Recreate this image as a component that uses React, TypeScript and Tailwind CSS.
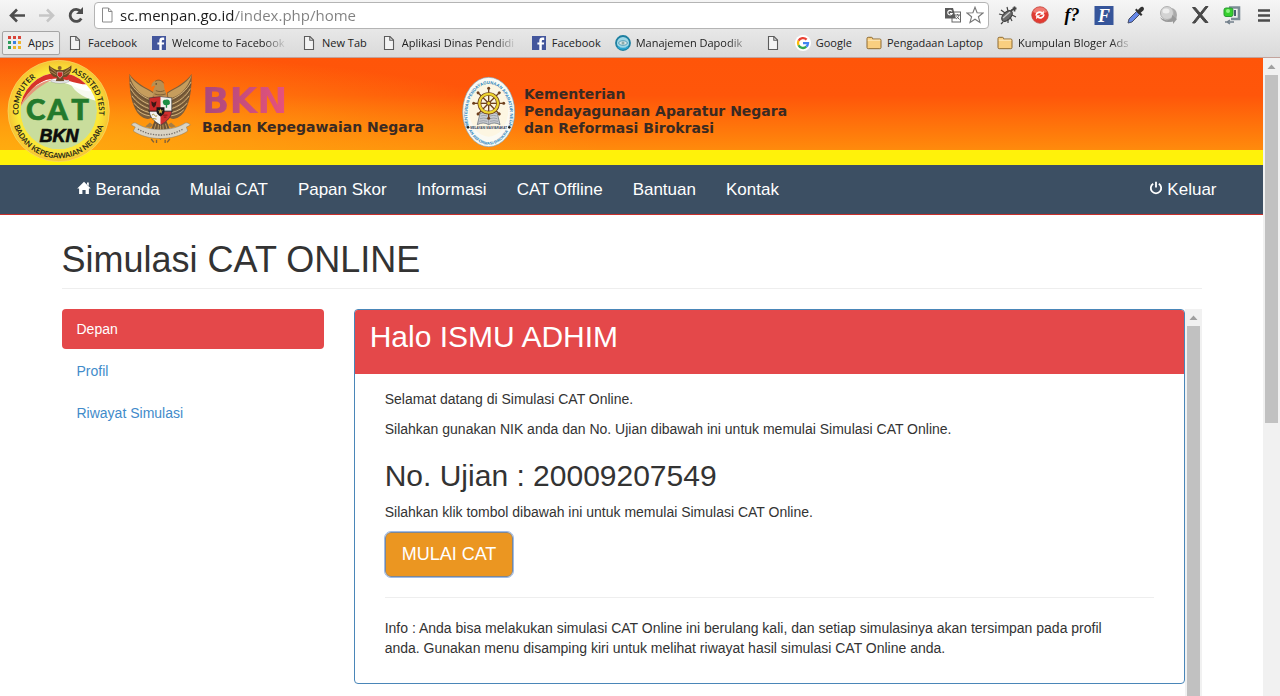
import React from "react";

const DocIcon = () => (
  <svg viewBox="0 0 16 16" className="size-4 shrink-0" aria-hidden="true">
    <path d="M3.5 1.5h5.5l3.5 3.5v9.5h-9z" fill="#f4f4f4" stroke="#5c5c5c" strokeWidth="1.1" />
    <path d="M8.8 1.7v3.6h3.6" fill="none" stroke="#5c5c5c" strokeWidth="1.1" />
  </svg>
);

const FacebookIcon = () => (
  <svg viewBox="0 0 16 16" className="size-4 shrink-0" aria-hidden="true">
    <rect x="1" y="1" width="14" height="14" fill="#43569c" />
    <path d="M8.3 15V9.6H6.4V7.4h1.9V5.8c0-2 1.1-3.2 3-3.2h1.9v2.3h-1.3c-.8 0-1.1.4-1.1 1.1v1.4h2.4l-.3 2.2h-2.1V15z" fill="#fff" />
  </svg>
);

const FolderIcon = () => (
  <svg viewBox="0 0 16 16" className="size-4 shrink-0" aria-hidden="true">
    <path d="M1 3.5c0-.8.4-1.2 1.2-1.2h3.2c.7 0 1 .3 1.1 1l.1.7h7.2c.8 0 1.2.4 1.2 1.2v7.3c0 .8-.4 1.2-1.2 1.2H2.2c-.8 0-1.2-.4-1.2-1.2z" fill="#f9cf80" stroke="#8d6a33" />
    <path d="M1.8 5.2h12.4" stroke="#fdebc2" />
  </svg>
);

const GoogleIcon = () => (
  <svg viewBox="0 0 16 16" className="size-4 shrink-0" aria-hidden="true">
    <circle cx="8" cy="8" r="8" fill="#fff" />
    <g fill="none" strokeWidth="2.3">
      <path d="M11.6 4.6A5 5 0 0 0 3.5 5.8" stroke="#ea4335" />
      <path d="M3.5 5.8a5 5 0 0 0 0 4.4" stroke="#fbbc05" />
      <path d="M3.5 10.2a5 5 0 0 0 7.8 1.5" stroke="#34a853" />
      <path d="M11.3 11.7A4.8 4.8 0 0 0 13 8.2H8" stroke="#4285f4" />
    </g>
  </svg>
);

const DapodikIcon = () => (
  <svg viewBox="0 0 16 16" className="size-4 shrink-0" aria-hidden="true">
    <circle cx="8" cy="8" r="7" fill="#9fd7e6" stroke="#1d7fa0" strokeWidth="1.8" />
    <path d="M3.5 8c1-3 8-3 9 0-1 3-8 3-9 0z" fill="#d8e6e6" stroke="#3d8da8" strokeWidth=".8" />
    <circle cx="8" cy="8" r="1.5" fill="#8aa" />
    <path d="M3 11.5c2 3 8 3 10 0" fill="none" stroke="#2aa4cf" strokeWidth="1.8" />
  </svg>
);

const AppsIcon = () => {
  const colors = ["#d8453a", "#d8453a", "#d8453a", "#2c9c5b", "#3a7fe0", "#efb52c", "#2c9c5b", "#efb52c", "#efb52c"];
  return (
    <svg viewBox="0 0 13 13" className="size-[13px] shrink-0" aria-hidden="true">
      {colors.map((c, i) => (
        <rect key={i} x={(i % 3) * 5} y={Math.floor(i / 3) * 5} width="3" height="3" fill={c} />
      ))}
    </svg>
  );
};

const bookmarks: { icon: () => React.ReactElement; label: string; fade?: boolean }[] = [
  { icon: DocIcon, label: "Facebook" },
  { icon: FacebookIcon, label: "Welcome to Facebook", fade: true },
  { icon: DocIcon, label: "New Tab" },
  { icon: DocIcon, label: "Aplikasi Dinas Pendidi", fade: true },
  { icon: FacebookIcon, label: "Facebook" },
  { icon: DapodikIcon, label: "Manajemen Dapodik", fade: true },
  { icon: DocIcon, label: "" },
  { icon: GoogleIcon, label: "Google" },
  { icon: FolderIcon, label: "Pengadaan Laptop" },
  { icon: FolderIcon, label: "Kumpulan Bloger Ads", fade: true },
];

const extensions: { name: string; art: React.ReactElement }[] = [
  {
    name: "Bug",
    art: (
      <g stroke="#444" fill="none" strokeWidth="1.2">
        <ellipse cx="9" cy="11" rx="6.5" ry="3.8" transform="rotate(-45 9 11)" fill="#6d6d6d" />
        <path d="M5 13l7-6" stroke="#ccc" />
        <path d="M1 9l4 1M3 5l4 3M9 2l1 4M10 18v-4M14 16l-2-4M18 12l-4-2M5 17l-2 2" />
        <path d="M13 6l4-4M14.5 3.5h4M16.5 1.5v5" strokeWidth="1.8" />
      </g>
    ),
  },
  {
    name: "Refresh",
    art: (
      <g>
        <circle cx="10" cy="10" r="8.3" fill="#e23b32" stroke="#b9483f" strokeWidth=".7" />
        <path d="M3 7a7.5 7.5 0 0 1 14 0c-5 2-9 2-14 0z" fill="#f58c82" opacity=".8" />
        <path d="M6 10.5c.5-3.5 4-4 6-2.5M14 9.5c-.5 3.5-4 4-6 2.5" stroke="#fff" strokeWidth="1.7" fill="none" />
        <path d="M13.8 5.8v4h-4zM6.2 14.2v-4h4z" fill="#fff" />
      </g>
    ),
  },
  {
    name: "Font finder",
    art: (
      <text x="10" y="16" textAnchor="middle" fontFamily="Liberation Serif, serif" fontWeight="700" fontStyle="italic" fontSize="18" fill="#000">
        f?
      </text>
    ),
  },
  {
    name: "Flash",
    art: (
      <g>
        <rect x="0.5" y="1" width="19" height="19" fill="#36559a" />
        <text x="10" y="17" textAnchor="middle" fontFamily="Liberation Serif, serif" fontWeight="700" fontStyle="italic" fontSize="18" fill="#fff">
          F
        </text>
      </g>
    ),
  },
  {
    name: "Colour picker",
    art: (
      <g>
        <path d="M2 18l1-4 7.5-7.5 3 3L6 17z" fill="#6688e8" stroke="#444c66" />
        <path d="M9 5l6 6 1.5-1.5-1.8-1.8 2.6-2.2c2-2.2-.8-5-3-3l-2.4 2.6L10.5 3.5z" fill="#333" />
      </g>
    ),
  },
  {
    name: "Globe",
    art: (
      <g>
        <ellipse cx="13" cy="10" rx="6" ry="7" fill="#aaa" />
        <circle cx="9" cy="8" r="6.5" fill="#d3d3d3" stroke="#b2b2b2" />
        <path d="M2 12c5 4 9 4 12 1v-3l5 4-4 5v-3c-5 2-11 1-13-4z" fill="#999" />
        <ellipse cx="8" cy="6" rx="3.5" ry="2.5" fill="#eee" />
      </g>
    ),
  },
  {
    name: "X",
    art: <path d="M2.5 2.5h2.8L18 17.5h-3zM15.5 1.5H18L5 18H2.5z" fill="#484848" stroke="#484848" />,
  },
  {
    name: "Downloader",
    art: (
      <g>
        <path d="M7 2.5h10V14H9" fill="none" stroke="#7c8c96" strokeWidth="2.6" />
        <path d="M13 5v6" stroke="#4b5d70" strokeWidth="2" />
        <rect x="2" y="3" width="9" height="8.5" rx="2" fill="#35cf2d" stroke="#2b9a35" />
        <circle cx="6" cy="6" r="2" fill="#8ff284" />
        <path d="M3 17h9M8 19l-3-2 3-2" stroke="#73808c" strokeWidth="1.5" fill="none" />
      </g>
    ),
  },
  {
    name: "Menu",
    art: <path d="M4 5.5h12M4 10.5h12M4 15.5h12" stroke="#4b4b4b" strokeWidth="2.6" />,
  },
];

const BrowserBar = () => (
  <div className="shrink-0 border-b border-[#c3a39c] bg-linear-to-b from-[#f6f6f6] to-[#dadada] font-['Open_Sans','Noto_Sans',sans-serif] text-[#222]">
    <div className="flex h-[30px] items-center pr-[6px] pl-2">
      <button aria-label="Back" className="size-5">
        <svg viewBox="0 0 20 20" fill="none" stroke="#4d4d4d" strokeWidth="2.6">
          <path d="M17 10.5H4M9 4.5l-6 6 6 6" />
        </svg>
      </button>
      <button aria-label="Forward" className="ml-2 size-5">
        <svg viewBox="0 0 20 20" fill="none" stroke="#c6c6c6" strokeWidth="2.6">
          <path d="M3 10.5h13M11 4.5l6 6-6 6" />
        </svg>
      </button>
      <button aria-label="Reload" className="ml-[10px] size-5">
        <svg viewBox="0 0 20 20">
          <path d="M15.3 13.5a6 6 0 1 1-.6-7" fill="none" stroke="#4d4d4d" strokeWidth="2.8" />
          <path d="M17 2v7h-7z" fill="#4d4d4d" />
        </svg>
      </button>
      <div className="ml-2 flex h-[27px] grow items-center rounded-sm border border-[#b4b4b4] bg-white px-1">
        <svg viewBox="0 0 16 16" className="size-4 shrink-0" aria-hidden="true">
          <path d="M3.5 1h6L13 4.5V15H3.5z" fill="#fff" stroke="#8a8a8a" />
          <path d="M9.5 1v3.5H13" fill="none" stroke="#8a8a8a" />
        </svg>
        <input
          aria-label="Address"
          defaultValue="sc.menpan.go.id/index.php/home"
          className="ml-[5px] min-w-0 grow bg-[linear-gradient(90deg,#1c1c1c_115px,#808080_115px)] bg-clip-text text-[15px] leading-5 text-transparent outline-none"
        />
        <button aria-label="Translate" className="size-4">
          <svg viewBox="0 0 16 16">
            <rect x="7" y="5" width="8.5" height="10" fill="#fff" stroke="#666" />
            <path d="M0 1h8l3 10.5H0z" fill="#5b5b5b" />
            <path d="M7 4.4A2.3 2.3 0 1 0 7.2 6.5H5" fill="none" stroke="#fff" strokeWidth="1.1" />
            <path d="M10 8h5M12.5 7v1M14 8c-.5 2-2 3.500-3 4M11.500 9.500l3 3" fill="none" stroke="#666" />
          </svg>
        </button>
        <button aria-label="Bookmark this page" className="ml-[5px] size-[18px]">
          <svg viewBox="0 0 18 18">
            <path d="M9 1.2l2.1 5.5 5.9.3-4.6 3.7 1.6 5.7L9 13.2l-5 3.2 1.6-5.7L1 7l5.9-.3z" fill="#fff" stroke="#777" strokeWidth="1.1" />
          </svg>
        </button>
      </div>
      <div className="ml-[9px] flex gap-3">
        {extensions.map((e) => (
          <button key={e.name} aria-label={e.name} className="size-5">
            <svg viewBox="0 0 20 20">{e.art}</svg>
          </button>
        ))}
      </div>
    </div>
    <div className="flex h-[27px] items-center gap-[14px] pb-0.5 text-[11px] leading-4 whitespace-nowrap">
      <button className="-mr-[7px] ml-0.5 flex h-6 w-[58px] shrink-0 items-center gap-[7px] rounded-xs border border-[#a5a5a5] bg-[#ececec] px-[5px] shadow-xs">
        <AppsIcon />
        Apps
      </button>
      {bookmarks.map(({ icon: Icon, label, fade }, i) => (
        <a key={i} href="#" aria-label={label || "Bookmark"} className="flex shrink-0 items-center gap-[5px]">
          <Icon />
          {label && (
            <span className={fade ? "w-[115px] [mask-image:linear-gradient(90deg,#000_80%,transparent)]" : ""}>
              {label}
            </span>
          )}
        </a>
      ))}
    </div>
  </div>
);

const CatLogo = () => (
  <svg viewBox="20 6 312 318" className="h-[106px] w-[104px] shrink-0" role="img" aria-label="CAT BKN">
    <defs>
      <path id="ringTop" d="M54.7 178A121 121 0 1 1 295.3 178" />
      <path id="ringBottom" d="M41 210A141 141 0 0 0 309 210" />
      <clipPath id="ringInner">
        <circle cx="175" cy="165" r="115" />
      </clipPath>
      <radialGradient id="ringFill">
        <stop offset=".8" stopColor="#fbe738" />
        <stop offset="1" stopColor="#f5c433" />
      </radialGradient>
    </defs>
    <circle cx="175" cy="165" r="152" fill="url(#ringFill)" stroke="#f7dc6a" strokeWidth="2" />
    <g clipPath="url(#ringInner)">
      <circle cx="175" cy="165" r="115" fill="#c9dd9c" />
      <path d="M55 170C70 90 130 70 180 78c45 8 70 40 110 22V20H55z" fill="#fff" />
      <path d="M60 150C90 90 130 65 175 68c40 4 60 24 110 14V20H60z" fill="#d7332a" />
      <path d="M60 150c25-50 60-75 100-80-30 12-70 40-98 80z" fill="#e5977b" />
      <path d="M210 82c25 12 50 18 80 14v40c-20-8-60-14-80-54z" fill="#fff" opacity=".85" />
    </g>
    <g>
      <path d="M146 28c8 8 16 12 24 14h18c8-2 18-6 25-14 2 14-3 26-14 34l-11 2 4 12h-26l4-12-10-2c-11-8-16-20-14-34z" fill="#6c4a26" />
      <path d="M150 36l18 14M150 46l17 10M209 36l-17 14M209 46l-17 10" stroke="#b9935a" strokeWidth="2.5" />
      <circle cx="178" cy="36" r="6" fill="#8b6430" />
      <path d="M171 48h16v10l-8 9-8-9z" fill="#c22" stroke="#eee" strokeWidth="1.5" />
      <path d="M152 71q27 10 54 0v6q-27 10-54 0z" fill="#eee" stroke="#777" />
    </g>
    <g fontFamily="Lato, sans-serif" fontWeight="700" fill="#2c2b16">
      <text fontSize="23">
        <textPath href="#ringTop" startOffset="2">COMPUTER</textPath>
      </text>
      <text fontSize="23">
        <textPath href="#ringTop" startOffset="100%" textAnchor="end">ASSISTED TEST</textPath>
      </text>
      <text fontSize="23">
        <textPath href="#ringBottom" startOffset="50%" textAnchor="middle">BADAN KEPEGAWAIAN NEGARA</textPath>
      </text>
    </g>
    <g fontFamily="Lato, sans-serif" fontWeight="900" fontSize="88" fill="#237a2c" stroke="#237a2c" strokeWidth="2">
      <text x="77" y="191">C</text>
      <text x="141" y="191">A</text>
      <text x="213" y="191">T</text>
    </g>
    <text x="176" y="258" textAnchor="middle" fontFamily="Liberation Sans, sans-serif" fontWeight="700" fontStyle="italic" fontSize="54" fill="#0c0c0c" stroke="#0c0c0c" strokeWidth="2">
      BKN
    </text>
  </svg>
);

const WingFeathers = () => (
  <g>
    <path d="M386 54c0 30 2 66 12 92 6 18 16 32 30 40 12 6 24 4 30-6l2-70c-14-10-26-14-40-24-14-10-26-20-34-32z" fill="#7d5f3c" />
    <path d="M386 56c8 14 20 24 34 34 14 8 28 14 38 22l-2 16c-30-6-58-26-70-72z" fill="#c69d5d" />
    <g stroke="#d5b47c" strokeWidth="3" fill="none">
      <path d="M388 78c12 24 36 44 62 54" />
      <path d="M390 98c12 22 34 40 58 48" />
      <path d="M394 120c12 18 32 32 52 38" />
      <path d="M400 142c10 14 28 24 46 28" />
      <path d="M410 162c10 10 22 16 38 18" />
    </g>
    <g stroke="#4f3a24" strokeWidth="1.5" fill="none">
      <path d="M388 84c12 24 36 44 62 54M390 104c12 22 34 40 58 48M394 126c12 18 32 32 52 38M401 148c10 14 28 24 46 28" />
    </g>
  </g>
);

const GarudaLogo = () => (
  <svg viewBox="380 45 200 220" className="h-[73px] w-[67px] shrink-0" role="img" aria-label="Garuda Pancasila">
    <WingFeathers />
    <g transform="translate(960 0) scale(-1 1)">
      <WingFeathers />
    </g>
    <path d="M462 196l-18 44 12-4 6 12 8-8 10 12 10-12 8 8 6-12 12 4-18-44z" fill="#6d5234" />
    <path d="M466 204l-10 34M474 206l-4 38M480 206v42M487 206l4 38M495 204l10 34" stroke="#c9a566" strokeWidth="2.5" />
    <path d="M458 122c-2-16 2-24 6-32-4-2-8 0-11 5-2-10 4-20 16-22 14-2 24 8 22 22l9 27z" fill="#b98f52" />
    <path d="M464 76c8-6 20-4 26 6M466 104c8 4 18 4 26 0M462 114c10 4 24 4 34 0" stroke="#74532d" strokeWidth="2.5" fill="none" />
    <circle cx="467" cy="84" r="2" fill="#222" />
    <path d="M448 200l-14 12 14 4 10-8zM512 200l14 12-14 4-10-8z" fill="#a57d45" />
    <path d="M392 208c4-6 8-8 14-6 38 26 110 26 148 0 6-2 12 0 16 6l-12 6 4 12c-44 30-120 30-164 0l6-12z" fill="#d9d3c4" stroke="#857b68" strokeWidth="1.5" />
    <path d="M412 220c40 24 96 24 136 0" fill="none" stroke="#77706a" strokeWidth="4" strokeDasharray="4 4" />
    <path d="M452 250l8 10M468 252v10M494 252v10M508 250l-8 10" stroke="#7d5f3c" strokeWidth="4" />
    <path d="M446 126q34-8 68 0v38c0 20-16 34-34 44-18-10-34-24-34-44z" fill="#f3f1ee" />
    <path d="M446 126q16-4 34-4v44h-34z" fill="#c92a2a" />
    <path d="M480 166h34c0 20-16 32-34 42z" fill="#d23030" />
    <path d="M446 126q34-8 68 0v38c0 20-16 34-34 44-18-10-34-24-34-44z" fill="none" stroke="#333" strokeWidth="2" />
    <path d="M452 136l8 5 8-5-2 12-6 8-6-8z" fill="#3c1714" />
    <path d="M488 142c-4-8 4-12 8-10 6-4 14 2 12 8 2 6-4 8-8 8v8h-4v-8c-4 0-8-2-8-6z" fill="#1d8f45" />
    <path d="M454 178q6-6 8 0t8 2M456 188l12 2" stroke="#a8913a" strokeWidth="3" fill="none" />
    <path d="M487 178h14M490 184h8" stroke="#7e1818" strokeWidth="3" />
    <path d="M444 166h72" stroke="#111" strokeWidth="2.5" />
    <path d="M468 154h24v14c0 6-6 10-12 14-6-4-12-8-12-14z" fill="#171717" />
    <path d="M480 158l2 6h6l-5 4 2 6-5-4-5 4 2-6-5-4h6z" fill="#d8b440" />
  </svg>
);

const MinistryLogo = () => {
  const spokes = [0, 45, 90, 135, 180, 225, 270, 315];
  return (
    <svg viewBox="786 60 162 216" className="h-[72px] w-[54px] shrink-0" role="img" aria-label="Kementerian PAN-RB">
      <defs>
        <path id="ovalTop" d="M806 208A64 92 0 1 1 926 208" />
        <path id="ovalBottom" d="M807 224A72 99 0 0 0 925 224" />
      </defs>
      <ellipse cx="866" cy="168" rx="78" ry="104" fill="#fbfaf3" stroke="#7fa9c6" strokeWidth="2" />
      <ellipse cx="866" cy="160" rx="59" ry="82" fill="#fdf6e2" />
      <g fontFamily="Liberation Sans, sans-serif" fontWeight="700" fill="#2a86c0">
        <text fontSize="13">
          <textPath href="#ovalTop" startOffset="50%" textAnchor="middle">KEMENTERIAN PENDAYAGUNAAN APARATUR NEGARA</textPath>
        </text>
        <text fontSize="12">
          <textPath href="#ovalBottom" startOffset="50%" textAnchor="middle">DAN REFORMASI BIROKRASI</textPath>
        </text>
      </g>
      <path d="M832 206q18-10 34 0 16-10 34 0l-8-34q-14-6-26 0-12-6-26 0z" fill="#c9cbd0" stroke="#55606c" strokeWidth="2" />
      <path d="M866 172v34M842 180q10-4 20 0M840 188q12-4 22 0M838 196q12-4 24 0M870 180q10-4 20 0M870 188q12-4 22 0M870 196q12-4 24 0" stroke="#6c7680" strokeWidth="1.5" fill="none" />
      {spokes.map((a) => (
        <g key={a} transform={"rotate(" + a + " 866 142)"}>
          <path d="M866 142V100" stroke="#6e3f1c" strokeWidth="4" />
          <circle cx="866" cy="97" r="4.5" fill="#6e3f1c" />
        </g>
      ))}
      <circle cx="866" cy="142" r="28" fill="none" stroke="#6e3f1c" strokeWidth="11" />
      <circle cx="866" cy="142" r="28" fill="none" stroke="#ecd32f" strokeWidth="7" />
      <circle cx="866" cy="142" r="6" fill="#ecd32f" stroke="#6e3f1c" strokeWidth="3" />
      <text x="866" y="219" textAnchor="middle" fontFamily="Liberation Sans, sans-serif" fontWeight="700" fontSize="9" fill="#33415c">
        MELAYANI MASYARAKAT
      </text>
      <circle cx="804" cy="214" r="4" fill="#222" />
      <circle cx="928" cy="214" r="4" fill="#222" />
    </svg>
  );
};

const Banner = () => (
  <header className="flex h-[107px] shrink-0 items-start bg-[linear-gradient(0deg,#fff20a_15px,transparent_15px),radial-gradient(ellipse_600px_100px_at_0%_92px,#ffab0f_0%,transparent_100%),linear-gradient(180deg,#ff5509_0%,#ff560a_35%,#ff8b0c_92px)] pl-[7px] font-['DejaVu_Sans',sans-serif] font-bold text-[#3a2a22]">
    <CatLogo />
    <div className="mt-[13px] ml-4 flex items-start gap-2">
      <GarudaLogo />
      <div className="mt-3">
        <div className="w-max bg-linear-to-r from-[#a8487c] to-[#e8527c] bg-clip-text text-4xl leading-9 text-transparent">BKN</div>
        <div className="text-sm leading-4 whitespace-nowrap">Badan Kepegawaian Negara</div>
      </div>
    </div>
    <div className="mt-[18px] ml-[38px] flex items-start gap-2">
      <MinistryLogo />
      <div className="mt-[10px] text-sm leading-[17px] whitespace-nowrap">
        Kementerian
        <br />
        Pendayagunaan Aparatur Negara
        <br />
        dan Reformasi Birokrasi
      </div>
    </div>
  </header>
);

const HomeGlyph = () => (
  <svg viewBox="0 0 14 14" className="mr-[5px] inline-block size-[14px] align-baseline" fill="#fff" aria-hidden="true">
    <path d="M7 .8l6.8 6.7h-1.900V13H8.600V9H5.400v4H2.100V7.500H.2z" />
    <path d="M10 1.600h1.800v3.500L10 3.400z" />
  </svg>
);

const PowerGlyph = () => (
  <svg viewBox="0 0 14 14" className="mr-1 inline-block size-[14px] align-baseline" fill="none" stroke="#fff" strokeWidth="1.8" aria-hidden="true">
    <path d="M4.2 2.7a5.2 5.2 0 1 0 5.6 0M7 .8v5.600" />
  </svg>
);

const navItems = ["Mulai CAT", "Papan Skor", "Informasi", "CAT Offline", "Bantuan", "Kontak"];

const NavBar = () => (
  <nav className="shrink-0 border-b border-[#c9302c] bg-[#3c4f63]">
    <div className="mx-auto flex h-[49px] w-full max-w-[1170px] items-center pl-[30px] text-[17px] leading-5 text-white">
      <ul className="flex gap-[30px]">
        <li>
          <a href="#">
            <HomeGlyph />
            Beranda
          </a>
        </li>
        {navItems.map((n) => (
          <li key={n}>
            <a href="#">{n}</a>
          </li>
        ))}
      </ul>
      <a href="#" className="ml-auto">
        <PowerGlyph />
        Keluar
      </a>
    </div>
  </nav>
);

const ScrollArrow = () => (
  <svg viewBox="0 0 17 17" className="size-[17px] shrink-0" aria-hidden="true">
    <path d="M4.5 11l4-4.500 4 4.500z" fill="#a0a0a0" />
  </svg>
);

export default function App() {
  return (
    <div className="flex h-screen flex-col overflow-hidden bg-white font-['Liberation_Sans',Arial,sans-serif] text-sm leading-5 text-[#333]">
      <BrowserBar />
      <div className="flex min-h-0 grow">
        <div className="flex min-w-0 grow flex-col">
          <Banner />
          <NavBar />
          <main className="mx-auto flex min-h-0 w-full max-w-[1170px] grow flex-col px-[15px] pt-[25px]">
            <h1 className="mb-5 border-b border-[#eee] pb-2 text-4xl leading-10">Simulasi CAT ONLINE</h1>
            <div className="flex min-h-0 grow gap-[30px]">
              <ul className="flex w-[23%] shrink-0 flex-col gap-0.5 text-[#428bca]">
                <li>
                  <a href="#" className="block rounded bg-[#e4484a] px-[15px] py-[10px] text-white">Depan</a>
                </li>
                <li>
                  <a href="#" className="block px-[15px] py-[10px]">Profil</a>
                </li>
                <li>
                  <a href="#" className="block px-[15px] py-[10px]">Riwayat Simulasi</a>
                </li>
              </ul>
              <div className="flex min-w-0 grow">
                <div className="min-w-0 grow overflow-hidden">
                  <section className="overflow-hidden rounded border border-[#4a86b8]">
                    <div className="bg-[#e4484a] px-[15px] pt-[10px] pb-[21px] text-white">
                      <h2 className="text-3xl leading-[33px]">Halo ISMU ADHIM</h2>
                    </div>
                    <div className="px-[30px] pt-[15px] pb-[25px]">
                      <p>Selamat datang di Simulasi CAT Online.</p>
                      <p className="mt-[10px]">Silahkan gunakan NIK anda dan No. Ujian dibawah ini untuk memulai Simulasi CAT Online.</p>
                      <h2 className="mt-5 mb-[10px] text-3xl leading-[33px]">No. Ujian : 20009207549</h2>
                      <p>Silahkan klik tombol dibawah ini untuk memulai Simulasi CAT Online.</p>
                      <button className="mt-[10px] block rounded-md border border-[#7d8794] bg-[#eb9621] px-4 py-[10px] text-lg leading-[23px] text-white outline-1 outline-[#9dbbe8]">
                        MULAI CAT
                      </button>
                      <hr className="my-5 border-[#eee]" />
                      <p className="pr-5">
                        Info : Anda bisa melakukan simulasi CAT Online ini berulang kali, dan setiap simulasinya akan tersimpan pada profil anda. Gunakan menu disamping kiri untuk melihat riwayat hasil simulasi CAT Online anda.
                      </p>
                    </div>
                  </section>
                </div>
                <div className="flex w-[17px] shrink-0 flex-col bg-[#f1f1f1]">
                  <ScrollArrow />
                  <div className="mx-0.5 grow bg-[#c1c1c1]" />
                </div>
              </div>
            </div>
          </main>
        </div>
        <div className="flex w-[17px] shrink-0 flex-col bg-[#f1f1f1]">
          <ScrollArrow />
          <div className="min-h-0 grow px-0.5">
            <div className="h-[56%] bg-[#c1c1c1]" />
          </div>
        </div>
      </div>
    </div>
  );
}
